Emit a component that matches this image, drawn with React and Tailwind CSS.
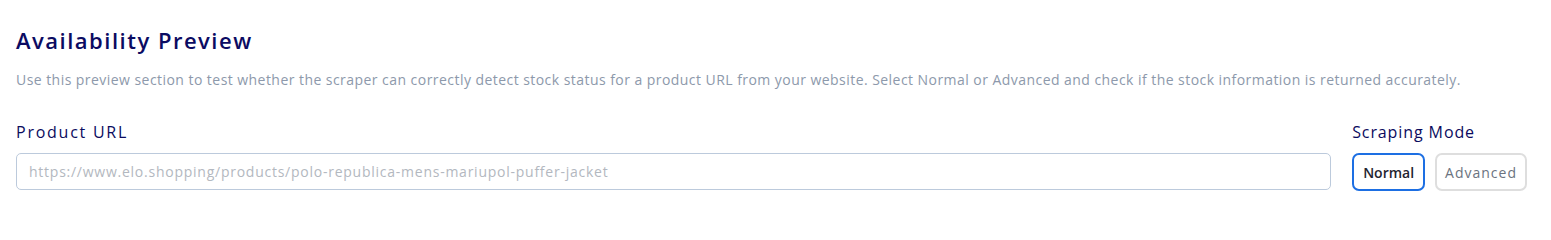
import React from "react";

export default function App() {
  const font = { fontFamily: '"Open Sans", "Liberation Sans", sans-serif' };
  return (
    <div className="bg-white w-[1551px] h-[206px] pl-4 pr-6 pt-[24px]" style={font}>
      <h2 className="text-[22px] leading-[33px] font-semibold tracking-[1.5px] text-[#0b0b62]">Availability Preview</h2>
      <p className="mt-[12px] text-[14px] leading-[21px] tracking-[0.45px] text-[#8d99ab]">
        Use this preview section to test whether the scraper can correctly detect stock status for a product URL from your website. Select Normal or Advanced and check if the stock information is returned accurately.
      </p>
      <div className="mt-[30px] flex gap-[21px] items-start">
        <div className="flex-1 flex flex-col gap-[9px]">
          <label className="text-[16px] leading-[24px] font-medium tracking-[1.75px] text-[#0b0b5e]">Product URL</label>
          <input
            readOnly
            placeholder="https://www.elo.shopping/products/polo-republica-mens-mariupol-puffer-jacket"
            className="h-[37px] w-full rounded-[5px] border border-[#bccadc] px-3 text-[14px] tracking-[0.75px] text-[#374151] placeholder:text-[#b3b8c0] outline-none"
            style={font}
          />
        </div>
        <div className="flex flex-col gap-[9px]">
          <label className="text-[16px] leading-[24px] font-medium tracking-[0.9px] text-[#0b0b5e]">Scraping Mode</label>
          <div className="flex gap-[10px]">
            <button className="h-[38px] px-[9px] rounded-[7px] border-2 border-[#1d6fe3] text-[14px] font-semibold text-[#1f2430]" style={font}>Normal</button>
            <button className="h-[38px] px-[8px] rounded-[7px] border-2 border-[#dedede] text-[14px] font-medium tracking-[1px] text-[#6b7380]" style={font}>Advanced</button>
          </div>
        </div>
      </div>
    </div>
  );
}
